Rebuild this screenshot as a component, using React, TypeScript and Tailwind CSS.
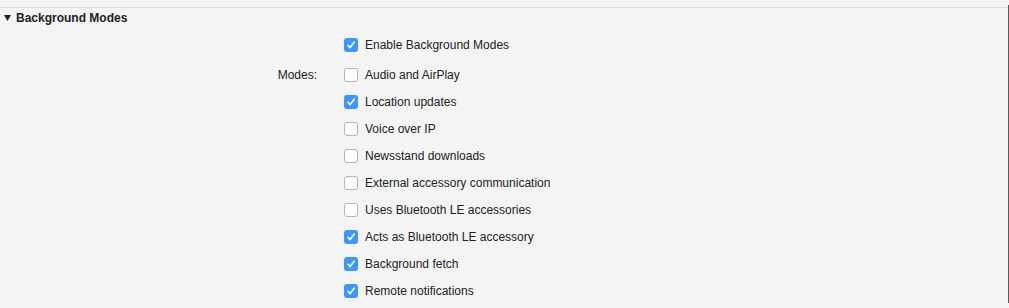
import React from "react";

const rows: { label: string; checked: boolean; side?: string }[] = [
  { label: "Audio and AirPlay", checked: false, side: "Modes:" },
  { label: "Location updates", checked: true },
  { label: "Voice over IP", checked: false },
  { label: "Newsstand downloads", checked: false },
  { label: "External accessory communication", checked: false },
  { label: "Uses Bluetooth LE accessories", checked: false },
  { label: "Acts as Bluetooth LE accessory", checked: true },
  { label: "Background fetch", checked: true },
  { label: "Remote notifications", checked: true },
];

function Box({ checked }: { checked: boolean }) {
  if (checked) {
    return (
      <div className="w-[14px] h-[14px] rounded-[3px] bg-[#3d97fb] flex items-center justify-center shrink-0">
        <svg width="10" height="10" viewBox="0 0 10 10" fill="none">
          <path d="M2 5.3 L4.1 7.6 L8.2 2.2" stroke="white" strokeWidth="1.6" strokeLinecap="round" strokeLinejoin="round" />
        </svg>
      </div>
    );
  }
  return <div className="w-[14px] h-[14px] rounded-[3px] bg-white border border-[#b5b5b5] shrink-0" />;
}

function Row({ label, checked, side, extra }: { label: string; checked: boolean; side?: string; extra?: string }) {
  return (
    <div className={`flex items-center h-[27px] ${extra ?? ""}`}>
      <div className="w-[318px] text-right pr-px text-[#222]">{side ?? ""}</div>
      <div className="ml-[26px] flex items-center">
        <Box checked={checked} />
        <span className="ml-[7px] text-[#222]">{label}</span>
      </div>
    </div>
  );
}

export default function App() {
  return (
    <div
      className="w-[1009px] h-[308px] bg-[#f4f4f4] flex text-[12px] overflow-hidden"
      style={{ fontFamily: '"Liberation Sans", Arial, sans-serif' }}
    >
      <div className="flex-1 flex flex-col pt-[7px]">
        <div className="border-t border-[#d9d9d9]" />
        <div className="flex items-center h-[19px] pl-[4px]">
          <svg width="7" height="6" viewBox="0 0 7 6" className="mt-[1px]">
            <path d="M0 0 H7 L3.5 6 Z" fill="#222" />
          </svg>
          <span className="ml-[5px] font-bold text-[#222]">Background Modes</span>
        </div>
        <div className="pt-[4px]">
          <Row label="Enable Background Modes" checked={true} />
          {rows.map((r, i) => (
            <Row key={r.label} label={r.label} checked={r.checked} side={r.side} extra={i === 0 ? "mt-[3px]" : ""} />
          ))}
        </div>
      </div>
      <div className="w-px my-[5px] bg-[#5a5a5a]" />
    </div>
  );
}
